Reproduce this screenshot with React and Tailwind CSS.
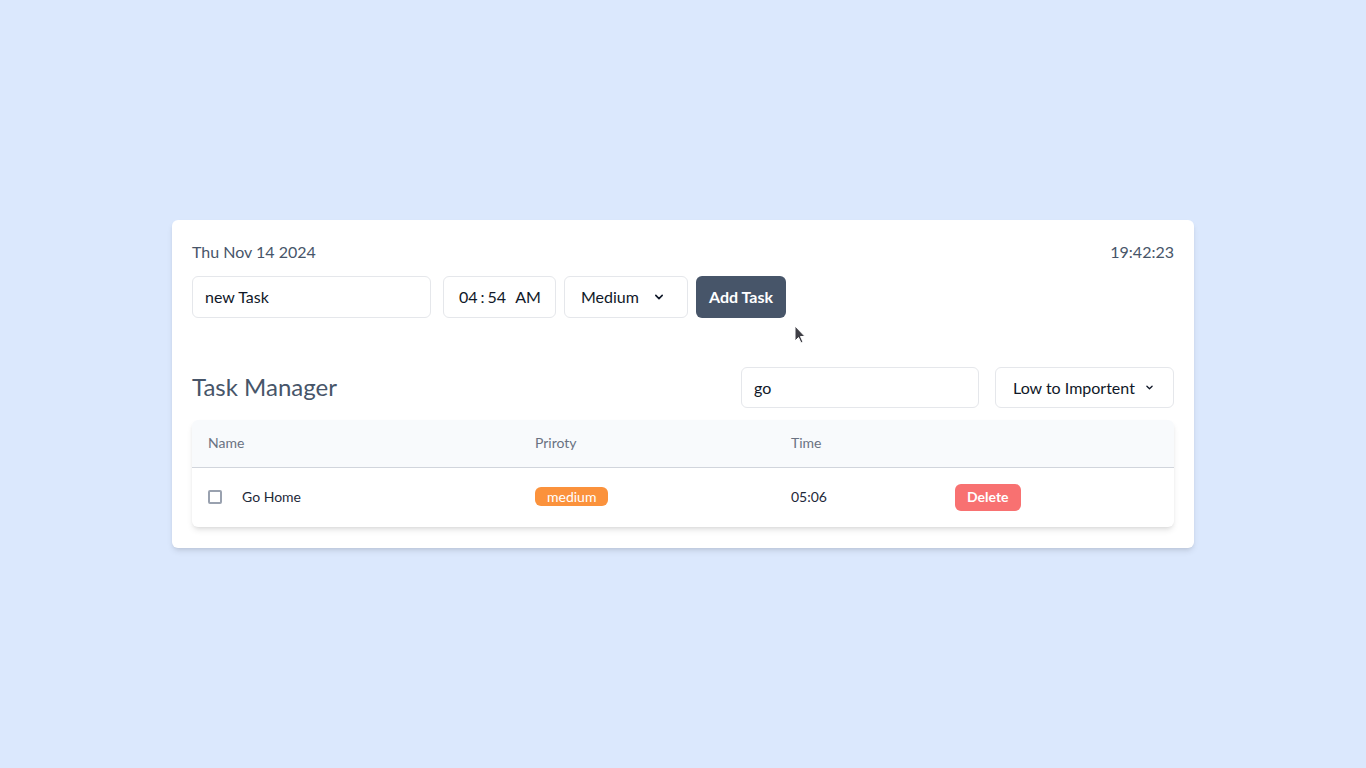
import React from 'react';

const Chevron = ({ className }) => (
    <svg className={className} viewBox="0 0 20 20" fill="none" stroke="currentColor" strokeWidth="2" strokeLinecap="round" strokeLinejoin="round">
        <path d="M6 8l4 4 4-4" />
    </svg>
);

const tasks = [{ name: 'Go Home', priority: 'medium', time: '05:06' }];

export default function App() {
    return (
        <div className="min-h-screen bg-[#dbe8fd] flex items-center justify-center font-['Lato',sans-serif] relative">
            <div className="w-[1022px] bg-white rounded-md shadow-md px-5 pt-5 pb-[21px]">
                <div className="flex items-center justify-between text-base text-[#475569] h-6">
                    <span>Thu Nov 14 2024</span>
                    <span>19:42:23</span>
                </div>
                <div className="flex items-center mt-3">
                    <div className="w-[239px] h-[42px] border border-gray-200 rounded-md px-3 flex items-center text-base text-gray-900">new Task</div>
                    <div className="ml-3 w-[113px] h-[42px] border border-gray-200 rounded-md pl-[15px] flex items-center text-base text-gray-900">
                        <span>04</span><span className="mx-[3px]">:</span><span>54</span><span className="ml-[9px]">AM</span>
                    </div>
                    <div className="ml-2 w-[124px] h-[42px] border border-gray-200 rounded-md pl-4 pr-5 flex items-center justify-between text-base text-gray-900">
                        <span>Medium</span>
                        <Chevron className="w-4 h-4" />
                    </div>
                    <button className="ml-2 w-[90px] h-[42px] bg-[#475569] text-white font-bold text-base rounded-md">Add Task</button>
                </div>

                <div className="flex items-center justify-between mt-[49px]">
                    <h1 className="text-2xl text-[#475569] -mt-px">Task Manager</h1>
                    <div className="flex items-center gap-4">
                        <div className="w-[238px] h-[41px] border border-gray-200 rounded-md px-3 flex items-center text-base text-gray-900">go</div>
                        <div className="w-[179px] h-[41px] border border-gray-200 rounded-md pl-[17px] flex items-center gap-2 text-base text-gray-900 whitespace-nowrap">
                            <span>Low to Importent</span>
                            <Chevron className="w-[13px] h-[13px]" />
                        </div>
                    </div>
                </div>

                <div className="mt-3 rounded-md shadow-md overflow-hidden">
                    <table className="w-full text-sm border-collapse">
                        <thead className="bg-slate-50">
                            <tr className="border-b border-gray-300 h-[47px]">
                                <th className="w-[327px] px-4 text-left font-normal text-gray-500">Name</th>
                                <th className="w-[256px] px-4 text-left font-normal text-gray-500">Priroty</th>
                                <th className="w-[164px] px-4 text-left font-normal text-gray-500">Time</th>
                                <th className="px-4"></th>
                            </tr>
                        </thead>
                        <tbody>
                            {tasks.map((t) => (
                                <tr key={t.name} className="h-[60px] text-gray-800">
                                    <td className="px-4">
                                        <div className="flex items-center gap-5">
                                            <span className="w-[14px] h-[14px] border-2 border-gray-400 rounded-[2px]" />
                                            <span>{t.name}</span>
                                        </div>
                                    </td>
                                    <td className="px-4">
                                        <span className="inline-block bg-[#fb923c] text-white rounded-md px-3 leading-[19px]">{t.priority}</span>
                                    </td>
                                    <td className="px-4">{t.time}</td>
                                    <td className="px-4">
                                        <button className="bg-[#f87171] text-white font-bold rounded-md px-3 h-[27px]">Delete</button>
                                    </td>
                                </tr>
                            ))}
                        </tbody>
                    </table>
                </div>
            </div>

            <svg className="absolute left-[794px] top-[325px] w-3 h-5" viewBox="0 0 12 20">
                <path d="M1 1 L1 16 L4.5 12.5 L7 18 L9 17 L6.5 11.5 L11 11.5 Z" fill="#3f3f46" stroke="white" strokeWidth="1" />
            </svg>
        </div>
    );
}
